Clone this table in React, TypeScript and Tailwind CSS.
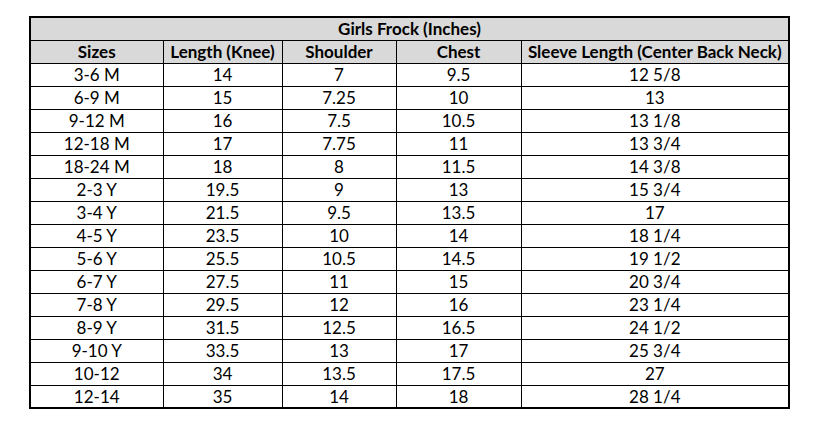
const rows: [string, string, string, string, string][] = [
  ['3-6 M', '14', '7', '9.5', '12 5/8'],
  ['6-9 M', '15', '7.25', '10', '13'],
  ['9-12 M', '16', '7.5', '10.5', '13 1/8'],
  ['12-18 M', '17', '7.75', '11', '13 3/4'],
  ['18-24 M', '18', '8', '11.5', '14 3/8'],
  ['2-3 Y', '19.5', '9', '13', '15 3/4'],
  ['3-4 Y', '21.5', '9.5', '13.5', '17'],
  ['4-5 Y', '23.5', '10', '14', '18 1/4'],
  ['5-6 Y', '25.5', '10.5', '14.5', '19 1/2'],
  ['6-7 Y', '27.5', '11', '15', '20 3/4'],
  ['7-8 Y', '29.5', '12', '16', '23 1/4'],
  ['8-9 Y', '31.5', '12.5', '16.5', '24 1/2'],
  ['9-10 Y', '33.5', '13', '17', '25 3/4'],
  ['10-12', '34', '13.5', '17.5', '27'],
  ['12-14', '35', '14', '18', '28 1/4'],
];

const headers = ['Sizes', 'Length (Knee)', 'Shoulder', 'Chest', 'Sleeve Length (Center Back Neck)'];

export default function App() {
  return (
    <div className="w-[827px] h-[438px] bg-white pl-[29px] pt-[16px] font-['Lato',sans-serif] text-[17px] text-black">
      <table className="w-[759px] table-fixed border-collapse border-2 border-black">
        <colgroup>
          <col className="w-[133px]" />
          <col className="w-[119px]" />
          <col className="w-[114px]" />
          <col className="w-[125px]" />
          <col className="w-[268px]" />
        </colgroup>
        <thead>
          <tr className="h-[23px] bg-[#d9d9d9]">
            <th colSpan={5} className="border border-black p-0 font-bold leading-none">
              Girls Frock (Inches)
            </th>
          </tr>
          <tr className="h-[23px] bg-[#d9d9d9]">
            {headers.map((h) => (
              <th key={h} className="border border-black p-0 font-bold leading-none whitespace-nowrap">
                {h}
              </th>
            ))}
          </tr>
        </thead>
        <tbody>
          {rows.map((r) => (
            <tr key={r[0]} className="h-[23px]">
              {r.map((c, i) => (
                <td key={i} className="border border-black p-0 text-center leading-none">
                  {c}
                </td>
              ))}
            </tr>
          ))}
        </tbody>
      </table>
    </div>
  );
}
